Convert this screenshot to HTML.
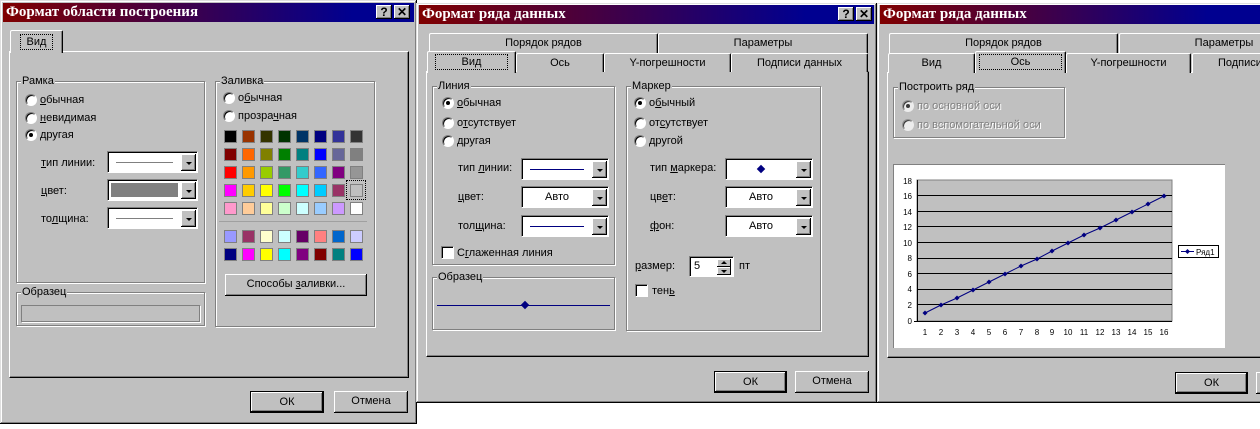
<!DOCTYPE html>
<html><head><meta charset="utf-8">
<style>
*{box-sizing:border-box;margin:0;padding:0}
body{width:1260px;height:429px;background:#fff;position:relative;overflow:hidden;font-family:"Liberation Sans","DejaVu Sans",sans-serif;font-size:11px;color:#000}
.a{position:absolute}
.dlg{position:absolute;background:#c0c0c0;box-shadow:inset -1px -1px #000,inset 1px 1px #dfdfdf,inset -2px -2px #808080,inset 2px 2px #fff}
.tb{position:absolute;height:19px;background:linear-gradient(90deg,#800000,#000090 85%);color:#fff;font-family:"Liberation Serif",serif;font-weight:bold;font-size:15px;line-height:19px;padding-left:3px;white-space:nowrap;overflow:hidden}
.tbtn{position:absolute;width:16px;height:14px;background:#c0c0c0;box-shadow:inset -1px -1px #000,inset 1px 1px #fff,inset -2px -2px #808080;color:#000;font-family:"Liberation Sans",sans-serif;font-size:12px;font-weight:bold;line-height:14px;text-align:center}
.panel{position:absolute;border-top:1px solid #fff;border-left:1px solid #fff;border-right:1px solid #000;border-bottom:1px solid #000;box-shadow:inset -1px -1px #808080}
.tab{position:absolute;background:#c0c0c0;border-top:1px solid #fff;border-left:1px solid #fff;border-right:1px solid #000;border-radius:2px 2px 0 0;box-shadow:inset -1px 0 #808080;text-align:center;line-height:18px;white-space:nowrap;overflow:hidden}
.grp{position:absolute;border:1px solid #808080;box-shadow:1px 1px 0 #fff,inset 1px 1px 0 #fff}
.lg{position:absolute;top:-8px;left:4px;background:#c0c0c0;padding:0 1px;line-height:14px}
.rad{position:absolute;width:12px;height:12px;border-radius:50%;background:#fff;border:1px solid;border-color:#808080 #fff #fff #808080;box-shadow:inset 1px 1px #000}
.rad.on::after{content:"";position:absolute;left:3px;top:3px;width:4px;height:4px;border-radius:50%;background:#000}
.lbl{position:absolute;white-space:nowrap;line-height:13px}
.cmb{position:absolute;background:#fff;border:1px solid;border-color:#808080 #fff #fff #808080;box-shadow:inset 1px 1px #000;text-align:center;line-height:21px;padding-right:16px}
.cmb .dd{position:absolute;right:1px;top:2px;bottom:1px;width:15px;background:#c0c0c0;box-shadow:inset -1px -1px #000,inset 1px 1px #fff,inset -2px -2px #808080}
.cmb .dd::after{content:"";position:absolute;left:5px;top:8px;border:3px solid transparent;border-top:3px solid #000;border-bottom:0}
.ln{position:absolute;left:8px;right:24px;top:10px;height:1px;background:#808080}
.sw{position:absolute;width:13px;height:13px;border:1px solid #808080}
.chk{position:absolute;width:13px;height:13px;background:#fff;border:1px solid;border-color:#808080 #fff #fff #808080;box-shadow:inset 1px 1px #000}
.btn{position:absolute;background:#c0c0c0;box-shadow:inset -1px -1px #000,inset 1px 1px #fff,inset -2px -2px #808080;text-align:center;line-height:21px}
.def{border:1px solid #000;box-shadow:inset -1px -1px #000,inset 1px 1px #fff,inset -2px -2px #808080}
.dis{color:#808080;text-shadow:1px 1px #fff}
.sp{position:absolute;right:2px;width:14px;height:8px;background:#c0c0c0;box-shadow:inset -1px -1px #000,inset 1px 1px #fff}
.sp::after{content:"";position:absolute;left:4px;top:2px;border:3px solid transparent}
.up::after{border-bottom:3px solid #000;border-top:0}
.dn::after{border-top:3px solid #000;border-bottom:0;top:3px}
u{text-decoration:underline}
</style></head><body>

<!-- Dialog 1 -->
<div class="dlg" style="left:0;top:0;width:417px;height:424px"></div>
<div class="tb" style="left:3px;top:3px;width:411px">Формат области построения</div>
<div class="tbtn" style="left:376px;top:5px">?</div>
<div class="tbtn" style="left:394px;top:5px">✕</div>
<div class="panel" style="left:9px;top:51px;width:400px;height:327px"></div>
<div class="tab" style="left:10px;top:30px;width:53px;height:23px;line-height:22px"><span style="outline:1px dotted #000;padding:1px 6px">Вид</span></div>

<div class="grp" style="left:16px;top:81px;width:189px;height:202px"><span class="lg">Рамка</span></div>
<div class="rad" style="left:25px;top:94px"></div><div class="lbl" style="left:40px;top:94px"><u>о</u>бычная</div>
<div class="rad" style="left:25px;top:112px"></div><div class="lbl" style="left:40px;top:112px"><u>н</u>евидимая</div>
<div class="rad on" style="left:25px;top:129px"></div><div class="lbl" style="left:40px;top:129px">другая</div>
<div class="lbl" style="left:41px;top:157px"><u>т</u>ип линии:</div>
<div class="cmb" style="left:107px;top:151px;width:91px;height:22px"><div class="ln"></div><div class="dd"></div></div>
<div class="lbl" style="left:41px;top:185px"><u>ц</u>вет:</div>
<div class="cmb" style="left:107px;top:179px;width:91px;height:22px"><div class="a" style="left:3px;top:3px;right:19px;bottom:3px;background:#808080"></div><div class="dd"></div></div>
<div class="lbl" style="left:41px;top:213px">то<u>л</u>щина:</div>
<div class="cmb" style="left:107px;top:207px;width:91px;height:22px"><div class="ln"></div><div class="dd"></div></div>

<div class="grp" style="left:16px;top:292px;width:189px;height:34px"><span class="lg">Образец</span></div>
<div class="a" style="left:21px;top:305px;width:179px;height:17px;border:1px solid #808080;box-shadow:1px 1px #fff"></div>

<div class="grp" style="left:215px;top:81px;width:160px;height:246px"><span class="lg">Заливка</span></div>
<div class="rad" style="left:223px;top:92px"></div><div class="lbl" style="left:238px;top:92px">о<u>б</u>ычная</div>
<div class="rad" style="left:223px;top:110px"></div><div class="lbl" style="left:238px;top:110px">прозра<u>ч</u>ная</div>
<div id="pal"></div>
<div class="a" style="left:219px;top:221px;width:148px;height:1px;background:#a0a0a0"></div>
<div class="btn" style="left:225px;top:274px;width:142px;height:22px">Способы <u>з</u>аливки...</div>
<div class="btn def" style="left:250px;top:391px;width:74px;height:22px">ОК</div>
<div class="btn" style="left:334px;top:391px;width:74px;height:22px">Отмена</div>

<!-- Dialog 2 -->
<div class="dlg" style="left:416px;top:3px;width:461px;height:400px"></div>
<div class="tb" style="left:419px;top:5px;width:455px">Формат ряда данных</div>
<div class="tbtn" style="left:838px;top:7px">?</div>
<div class="tbtn" style="left:856px;top:7px">✕</div>
<div class="panel" style="left:426px;top:71px;width:443px;height:286px"></div>
<div class="tab" style="left:429px;top:33px;width:229px;height:20px">Порядок рядов</div>
<div class="tab" style="left:658px;top:33px;width:210px;height:20px">Параметры</div>
<div class="tab" style="left:516px;top:53px;width:88px;height:19px">Ось</div>
<div class="tab" style="left:604px;top:53px;width:127px;height:19px">Y-погрешности</div>
<div class="tab" style="left:731px;top:53px;width:137px;height:19px">Подписи данных</div>
<div class="tab" style="left:427px;top:51px;width:89px;height:22px;line-height:20px"><span style="outline:1px dotted #000;padding:1px 26px">Вид</span></div>

<div class="grp" style="left:432px;top:86px;width:183px;height:179px"><span class="lg">Линия</span></div>
<div class="rad on" style="left:442px;top:97px"></div><div class="lbl" style="left:457px;top:97px"><u>о</u>бычная</div>
<div class="rad" style="left:442px;top:117px"></div><div class="lbl" style="left:457px;top:117px">о<u>т</u>сутствует</div>
<div class="rad" style="left:442px;top:135px"></div><div class="lbl" style="left:457px;top:135px">другая</div>
<div class="lbl" style="left:458px;top:162px">тип <u>л</u>инии:</div>
<div class="cmb" style="left:521px;top:158px;width:88px;height:22px"><div class="ln" style="background:#000080"></div><div class="dd"></div></div>
<div class="lbl" style="left:458px;top:191px"><u>ц</u>вет:</div>
<div class="cmb" style="left:521px;top:186px;width:88px;height:22px">Авто<div class="dd"></div></div>
<div class="lbl" style="left:458px;top:220px">тол<u>щ</u>ина:</div>
<div class="cmb" style="left:521px;top:215px;width:88px;height:22px"><div class="ln" style="background:#000080"></div><div class="dd"></div></div>
<div class="chk" style="left:441px;top:246px"></div><div class="lbl" style="left:457px;top:247px">С<u>г</u>лаженная линия</div>

<div class="grp" style="left:432px;top:277px;width:183px;height:53px"><span class="lg">Образец</span></div>
<div class="a" style="left:437px;top:305px;width:173px;height:1px;background:#000080"></div>
<div class="a" style="left:522px;top:302px;width:6px;height:6px;background:#000080;transform:rotate(45deg)"></div>

<div class="grp" style="left:626px;top:86px;width:195px;height:245px"><span class="lg">Маркер</span></div>
<div class="rad on" style="left:634px;top:97px"></div><div class="lbl" style="left:649px;top:97px">о<u>б</u>ычный</div>
<div class="rad" style="left:634px;top:117px"></div><div class="lbl" style="left:649px;top:117px">от<u>с</u>утствует</div>
<div class="rad" style="left:634px;top:135px"></div><div class="lbl" style="left:649px;top:135px">другой</div>
<div class="lbl" style="left:650px;top:162px">тип <u>м</u>аркера:</div>
<div class="cmb" style="left:725px;top:158px;width:88px;height:22px"><div class="a" style="left:32px;top:7px;width:6px;height:6px;background:#000080;transform:rotate(45deg)"></div><div class="dd"></div></div>
<div class="lbl" style="left:650px;top:191px">цв<u>е</u>т:</div>
<div class="cmb" style="left:725px;top:186px;width:88px;height:22px">Авто<div class="dd"></div></div>
<div class="lbl" style="left:650px;top:220px"><u>ф</u>он:</div>
<div class="cmb" style="left:725px;top:215px;width:88px;height:22px">Авто<div class="dd"></div></div>
<div class="lbl" style="left:635px;top:260px"><u>р</u>азмер:</div>
<div class="cmb" style="left:689px;top:256px;width:45px;height:21px;text-align:left;padding-left:4px;line-height:19px">5<div class="sp up" style="top:2px"></div><div class="sp dn" style="top:10px"></div></div>
<div class="lbl" style="left:739px;top:260px">пт</div>
<div class="chk" style="left:635px;top:284px"></div><div class="lbl" style="left:652px;top:285px">тен<u>ь</u></div>
<div class="btn def" style="left:714px;top:371px;width:73px;height:22px">ОК</div>
<div class="btn" style="left:795px;top:371px;width:74px;height:22px">Отмена</div>

<!-- Dialog 3 -->
<div class="dlg" style="left:877px;top:3px;width:400px;height:400px"></div>
<div class="tb" style="left:880px;top:5px;width:385px">Формат ряда данных</div>
<div class="panel" style="left:887px;top:72px;width:390px;height:286px"></div>
<div class="tab" style="left:889px;top:33px;width:229px;height:20px">Порядок рядов</div>
<div class="tab" style="left:1119px;top:33px;width:210px;height:20px">Параметры</div>
<div class="tab" style="left:888px;top:53px;width:87px;height:20px">Вид</div>
<div class="tab" style="left:1066px;top:53px;width:125px;height:20px">Y-погрешности</div>
<div class="tab" style="left:1192px;top:53px;width:137px;height:20px">Подписи данных</div>
<div class="tab" style="left:975px;top:51px;width:91px;height:22px;line-height:20px"><span style="outline:1px dotted #000;padding:1px 31px">Ось</span></div>

<div class="grp" style="left:893px;top:87px;width:172px;height:51px"><span class="lg">Построить ряд</span></div>
<div class="rad on" style="left:902px;top:100px;opacity:.7"></div><div class="lbl dis" style="left:917px;top:100px">по основной оси</div>
<div class="rad" style="left:902px;top:119px;opacity:.7"></div><div class="lbl dis" style="left:917px;top:119px">по вспомогательной оси</div>

<div class="a" style="left:893px;top:164px;width:332px;height:184px;background:#fff;border-top:1px solid #808080;border-left:1px solid #808080">
<svg width="331" height="183" style="position:absolute;left:0;top:0" font-family="Liberation Sans,sans-serif" font-size="8">
<defs><marker id="m" viewBox="-3 -3 6 6" markerWidth="5" markerHeight="5" refX="0" refY="0" markerUnits="userSpaceOnUse"><path d="M0-3L3 0 0 3-3 0z" fill="#000080"/></marker></defs>
<rect x="23" y="15" width="255" height="141" fill="#c0c0c0" stroke="#808080"/>
<g stroke="#000" stroke-width="1">
<line x1="23" y1="30.5" x2="278" y2="30.5"/><line x1="23" y1="46.5" x2="278" y2="46.5"/><line x1="23" y1="61.5" x2="278" y2="61.5"/><line x1="23" y1="77.5" x2="278" y2="77.5"/><line x1="23" y1="93.5" x2="278" y2="93.5"/><line x1="23" y1="108.5" x2="278" y2="108.5"/><line x1="23" y1="124.5" x2="278" y2="124.5"/><line x1="23" y1="139.5" x2="278" y2="139.5"/>
<line x1="23.5" y1="15" x2="23.5" y2="156"/><line x1="20" y1="156.5" x2="278" y2="156.5"/>
</g>
<polyline fill="none" stroke="#000080" marker-start="url(#m)" marker-mid="url(#m)" marker-end="url(#m)" points="31,148 47,140 63,133 79,125 95,117 111,109 127,101 143,94 158,86 174,78 190,70 206,63 222,55 238,47 254,39 270,31"/>
<g text-anchor="end"><text x="18" y="19">18</text><text x="18" y="34">16</text><text x="18" y="50">14</text><text x="18" y="65">12</text><text x="18" y="81">10</text><text x="18" y="96">8</text><text x="18" y="112">6</text><text x="18" y="127">4</text><text x="18" y="143">2</text><text x="18" y="159">0</text></g>
<g text-anchor="middle"><text x="31" y="170">1</text><text x="47" y="170">2</text><text x="63" y="170">3</text><text x="79" y="170">4</text><text x="95" y="170">5</text><text x="111" y="170">6</text><text x="127" y="170">7</text><text x="143" y="170">8</text><text x="158" y="170">9</text><text x="174" y="170">10</text><text x="190" y="170">11</text><text x="206" y="170">12</text><text x="222" y="170">13</text><text x="238" y="170">14</text><text x="254" y="170">15</text><text x="270" y="170">16</text></g>
<rect x="284.5" y="80.5" width="40" height="12" fill="#fff" stroke="#000"/>
<line x1="287" y1="86.5" x2="300" y2="86.5" stroke="#000080"/><path d="M293.5 84l2.5 2.5-2.5 2.5-2.5-2.5z" fill="#000080"/>
<text x="302" y="90">Ряд1</text>
</svg></div>
<div class="btn def" style="left:1175px;top:372px;width:73px;height:22px">ОК</div>
<div class="btn" style="left:1256px;top:372px;width:74px;height:22px"></div>

<script>
var c=[["#000","#993300","#333300","#003300","#003366","#000080","#333399","#333333"],
["#800000","#ff6600","#808000","#008000","#008080","#0000ff","#666699","#808080"],
["#ff0000","#ff9900","#99cc00","#339966","#33cccc","#3366ff","#800080","#969696"],
["#ff00ff","#ffcc00","#ffff00","#00ff00","#00ffff","#00ccff","#993366","#c0c0c0"],
["#ff99cc","#ffcc99","#ffff99","#ccffcc","#ccffff","#99ccff","#cc99ff","#ffffff"],
["#9999ff","#993366","#ffffcc","#ccffff","#660066","#ff8080","#0066cc","#ccccff"],
["#000080","#ff00ff","#ffff00","#00ffff","#800080","#800000","#008080","#0000ff"]];
var ys=[130,148,166,184,202,230,248],h="";
for(var r=0;r<7;r++)for(var k=0;k<8;k++){h+='<div class="sw" style="left:'+(224+k*18)+'px;top:'+ys[r]+'px;background:'+c[r][k]+'"></div>';}
h+='<div class="a" style="left:347px;top:181px;width:18px;height:18px;outline:1px dotted #000"></div>';
document.getElementById("pal").outerHTML=h;
</script>
</body></html>
